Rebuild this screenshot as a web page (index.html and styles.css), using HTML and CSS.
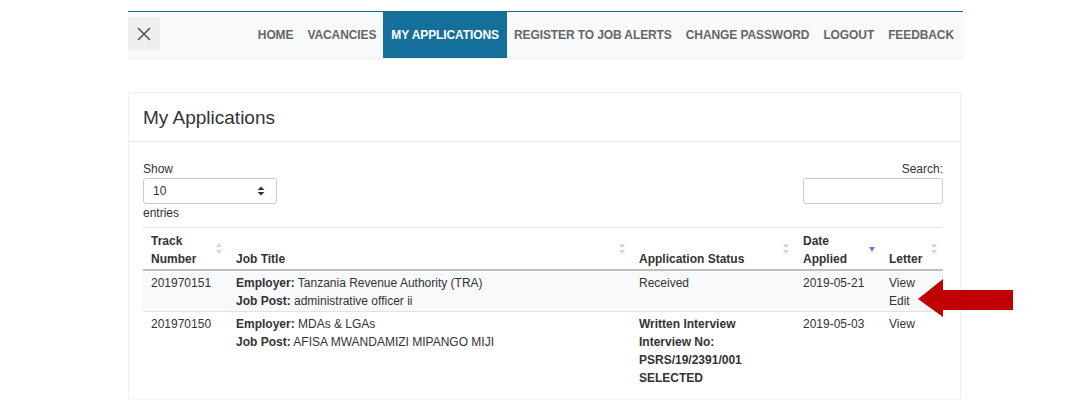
FILE: index.html
```html
<!DOCTYPE html>
<html>
<head>
<meta charset="utf-8">
<link rel="stylesheet" href="styles.css">
</head>
<body>
<div class="page">
  <nav class="navbar">
    <button class="close-btn" aria-label="close">
      <svg width="16" height="16" viewBox="0 0 16 16"><path d="M2 2 L14 14 M14 2 L2 14" stroke="#555" stroke-width="1.6" fill="none"/></svg>
    </button>
    <ul class="nav-items">
      <li>HOME</li>
      <li>VACANCIES</li>
      <li class="active">MY APPLICATIONS</li>
      <li>REGISTER TO JOB ALERTS</li>
      <li>CHANGE PASSWORD</li>
      <li>LOGOUT</li>
      <li>FEEDBACK</li>
    </ul>
  </nav>

  <section class="card">
    <div class="card-header">My Applications</div>
    <div class="card-body">
      <div class="controls">
        <div class="length">
          <div>Show</div>
          <div class="select"><span>10</span>
            <svg width="8" height="10" viewBox="0 0 8 10"><path d="M0.5 4 L4 0.5 L7.5 4 Z M0.5 6 L4 9.5 L7.5 6 Z" fill="#333"/></svg>
          </div>
          <div>entries</div>
        </div>
        <div class="search">
          <div>Search:</div>
          <div class="input"></div>
        </div>
      </div>
      <table class="apps">
        <colgroup>
          <col class="c1"><col class="c2"><col class="c3"><col class="c4"><col class="c5">
        </colgroup>
        <thead>
          <tr>
            <th>Track<br>Number<span class="sort"></span></th>
            <th>Job Title<span class="sort"></span></th>
            <th>Application Status<span class="sort"></span></th>
            <th>Date<br>Applied<span class="sort-desc"></span></th>
            <th>Letter<span class="sort"></span></th>
          </tr>
        </thead>
        <tbody>
          <tr class="odd">
            <td>201970151</td>
            <td><b>Employer:</b> Tanzania Revenue Authority (TRA)<br><b>Job Post:</b> administrative officer ii</td>
            <td>Received</td>
            <td>2019-05-21</td>
            <td>View<br>Edit</td>
          </tr>
          <tr>
            <td>201970150</td>
            <td><b>Employer:</b> MDAs &amp; LGAs<br><b>Job Post:</b> AFISA MWANDAMIZI MIPANGO MIJI</td>
            <td><b>Written Interview<br>Interview No:<br>PSRS/19/2391/001<br>SELECTED</b></td>
            <td>2019-05-03</td>
            <td>View</td>
          </tr>
        </tbody>
      </table>
    </div>
  </section>
</div>
<svg class="arrow" width="95" height="38" viewBox="0 0 95 38"><polygon points="0,20 25,0 25,11 95,11 95,31 25,31 25,38" fill="#c00000"/></svg>
</body>
</html>
```
FILE: styles.css
```css
html, body {
  margin: 0;
  padding: 0;
  background: #fff;
  font-family: "Liberation Sans", Arial, sans-serif;
  font-size: 12px;
  color: #333;
}
.page {
  width: 835px;
  margin-left: 128px;
  padding-top: 11px;
}
.navbar {
  display: flex;
  align-items: center;
  height: 46px;
  border-top: 1px solid #1c6a8e;
  background: #f8f9fa;
  box-shadow: 0 1px 1px rgba(0,0,0,0.06);
}
.close-btn {
  width: 32px;
  height: 33px;
  margin-top: 5px;
  align-self: flex-start;
  border: 0;
  padding: 0;
  background: #efefef;
  display: flex;
  align-items: center;
  justify-content: center;
}
.nav-items {
  list-style: none;
  margin: 0 2px 0 auto;
  padding: 0;
  display: flex;
  height: 46px;
}
.nav-items li {
  padding: 1px 7px 0;
  line-height: 45px;
  font-weight: bold;
  font-size: 12px;
  color: #666;
  letter-spacing: -0.1px;
}
.nav-items li.active {
  background: #14709a;
  color: #fff;
  padding: 1px 8px 0;
}
.card {
  margin-top: 34px;
  width: 833px;
  box-sizing: border-box;
  border: 1px solid #efefef;
  border-bottom-color: #f6f6f6;
  height: 308px;
}
.card-header {
  height: 48px;
  border-bottom: 1px solid #e6e6e6;
  padding-left: 14px;
  font-size: 19px;
  line-height: 49px;
  color: #333;
}
.card-body {
  padding: 18px 17px 0 14px;
  line-height: 18px;
}
.controls {
  display: flex;
  justify-content: space-between;
  margin-bottom: 5px;
}
.select {
  width: 134px;
  height: 26px;
  box-sizing: border-box;
  border: 1px solid #ccc;
  border-radius: 3px;
  display: flex;
  align-items: center;
  justify-content: space-between;
  padding: 0 11px 0 9px;
  font-size: 12px;
}
.search {
  text-align: right;
}
.search .input {
  width: 140px;
  height: 26px;
  box-sizing: border-box;
  border: 1px solid #ccc;
  border-radius: 3px;
}
.apps {
  width: 800px;
  border-collapse: collapse;
  table-layout: fixed;
  border-top: 1px solid #e2e2e2;
}
.c1 { width: 85px; }
.c2 { width: 403px; }
.c3 { width: 164px; }
.c4 { width: 86px; }
.c5 { width: 62px; }
.apps th {
  position: relative;
  text-align: left;
  vertical-align: bottom;
  padding: 4px 8px 1px;
  font-weight: bold;
  border-bottom: 2px solid #bdbdbd;
}
.apps td {
  vertical-align: top;
  padding: 3px 8px 1px;
  border-top: 1px solid #e2e2e2;
}
.apps tbody tr:first-child td {
  border-top: 0;
}
.apps tr.odd td {
  background: #f8f9fb;
}
.sort, .sort-desc {
  position: absolute;
  right: 5px;
  top: 50%;
  width: 7px;
  height: 11px;
  margin-top: -6px;
}
.sort::before, .sort::after {
  content: "";
  position: absolute;
  left: 0;
  border-left: 3.5px solid transparent;
  border-right: 3.5px solid transparent;
}
.sort::before {
  top: 0;
  border-bottom: 4px solid #d5d5d5;
}
.sort::after {
  bottom: 0;
  border-top: 4px solid #d5d5d5;
}
.sort-desc::after {
  content: "";
  position: absolute;
  left: 0;
  top: 4px;
  border-left: 3.5px solid transparent;
  border-right: 3.5px solid transparent;
  border-top: 5px solid #6b7bd0;
}
.arrow {
  position: absolute;
  left: 918px;
  top: 279px;
}
```
